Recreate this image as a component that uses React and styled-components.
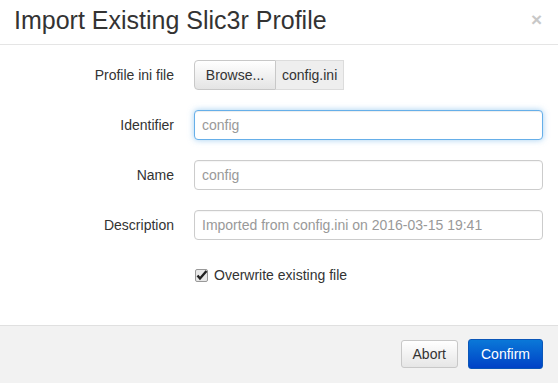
import React from 'react'
import styled, { createGlobalStyle } from 'styled-components'

const GlobalStyle = createGlobalStyle`
  html, body {
    margin: 0;
    padding: 0;
    background: #fff;
    font-family: "Liberation Sans", Arial, sans-serif;
    color: #333;
  }
  * { box-sizing: border-box; }
`

const Modal = styled.div`
  width: 558px;
  height: 383px;
  display: flex;
  flex-direction: column;
  background: #fff;
`

const Header = styled.div`
  height: 45px;
  display: flex;
  align-items: center;
  justify-content: space-between;
  padding: 0 16px 3px 14px;
  border-bottom: 1px solid #e5e5e5;
`

const Title = styled.h4`
  margin: 0;
  font-size: 25px;
  font-weight: normal;
  color: #333;
`

const Close = styled.span`
  font-size: 19px;
  font-weight: bold;
  color: #c8c8c8;
  line-height: 1;
  margin-top: -2px;
`

const Body = styled.div`
  flex: 1;
  padding-top: 15px;
  display: flex;
  flex-direction: column;
  gap: 20px;
`

const Row = styled.div`
  display: grid;
  grid-template-columns: 174px 349px;
  column-gap: 20px;
  align-items: center;
  height: 30px;
`

const Label = styled.label`
  text-align: right;
  font-size: 14px;
  color: #333;
`

const FileGroup = styled.div`
  display: flex;
  height: 30px;
`

const BrowseButton = styled.button`
  width: 82px;
  height: 30px;
  font: inherit;
  font-size: 14px;
  color: #333;
  border: 1px solid #c8c8c8;
  border-radius: 4px 0 0 4px;
  background: linear-gradient(#ffffff, #e4e4e4);
  padding: 0;
`

const FileName = styled.span`
  display: flex;
  align-items: center;
  padding: 0 6px;
  height: 30px;
  font-size: 14px;
  background: #eeeeee;
  border: 1px solid #dcdcdc;
  border-left: none;
`

const Input = styled.input`
  width: 349px;
  height: 30px;
  font: inherit;
  font-size: 14px;
  color: #333;
  padding: 0 7px;
  border: 1px solid ${p => (p.$focused ? '#66afe9' : '#cccccc')};
  border-radius: 4px;
  outline: none;
  box-shadow: ${p =>
    p.$focused
      ? 'inset 0 1px 1px rgba(0,0,0,.075), 0 0 6px rgba(102,175,233,.6)'
      : 'inset 0 1px 1px rgba(0,0,0,.04)'};
  &::placeholder { color: #999; }
`

const CheckRow = styled.label`
  display: flex;
  align-items: center;
  gap: 6px;
  margin-top: 5px;
  padding-left: 195px;
  height: 20px;
  font-size: 14px;
  color: #333;
`

const Footer = styled.div`
  height: 58px;
  border-top: 1px solid #e0e0e0;
  background: #f2f2f2;
  display: flex;
  align-items: center;
  justify-content: flex-end;
  gap: 10px;
  padding: 0 15px 2px;
`

const Button = styled.button`
  height: ${p => (p.$primary ? '30px' : '28px')};
  padding: 0 ${p => (p.$primary ? '12px' : '11px')};
  font: inherit;
  font-size: 14px;
  border-radius: 3px;
  border: 1px solid ${p => (p.$primary ? '#0b56b8' : '#c8c8c8')};
  color: ${p => (p.$primary ? '#fff' : '#333')};
  background: ${p =>
    p.$primary ? 'linear-gradient(#0a78d8, #0042c6)' : 'linear-gradient(#ffffff, #e6e6e6)'};
`

const CheckIcon = () => (
  <svg width="13" height="13" viewBox="0 0 13 13">
    <rect x="0.5" y="0.5" width="12" height="12" rx="1.5" fill="#e8e8e8" stroke="#999" />
    <path d="M2.5 6.5 L5 9.5 L11.5 2" fill="none" stroke="#222" strokeWidth="2.4" />
  </svg>
)

const App = () => {
  return (
    <Modal>
      <GlobalStyle />
      <Header>
        <Title>Import Existing Slic3r Profile</Title>
        <Close>×</Close>
      </Header>
      <Body>
        <Row>
          <Label>Profile ini file</Label>
          <FileGroup>
            <BrowseButton>Browse...</BrowseButton>
            <FileName>config.ini</FileName>
          </FileGroup>
        </Row>
        <Row>
          <Label>Identifier</Label>
          <Input $focused placeholder="config" />
        </Row>
        <Row>
          <Label>Name</Label>
          <Input placeholder="config" />
        </Row>
        <Row>
          <Label>Description</Label>
          <Input placeholder="Imported from config.ini on 2016-03-15 19:41" />
        </Row>
        <CheckRow>
          <CheckIcon />
          Overwrite existing file
        </CheckRow>
      </Body>
      <Footer>
        <Button>Abort</Button>
        <Button $primary>Confirm</Button>
      </Footer>
    </Modal>
  )
}

export default App
